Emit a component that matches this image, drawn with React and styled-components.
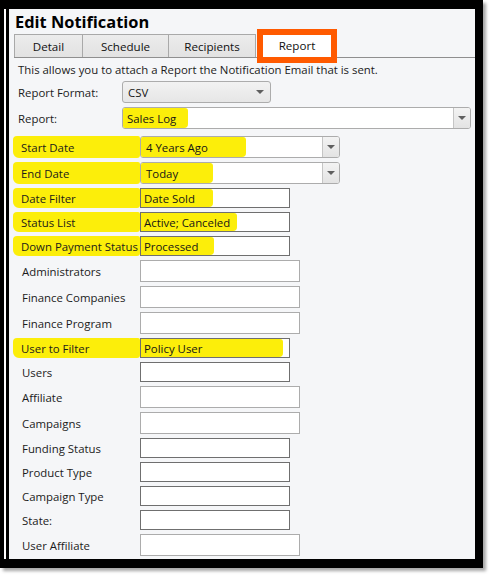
import React from "react";
import styled, { createGlobalStyle } from "styled-components";

const GlobalStyle = createGlobalStyle`
  html, body {
    margin: 0;
    padding: 0;
    background: #ffffff;
  }
  body {
    font-family: "Open Sans", "Noto Sans", sans-serif;
    font-size: 11.4px;
    color: #1b1b1b;
  }
`;

const Page = styled.div`
  width: 490px;
  height: 576px;
  background: #ffffff;
`;

const Frame = styled.div`
  width: 471px;
  height: 550px;
  border-top: 9px solid #000;
  border-right: 8px solid #000;
  border-bottom: 9px solid #000;
  border-left: 4px solid #000;
  background: #ffffff;
  box-shadow: 3px 3px 3px rgba(0, 0, 0, 0.35);
  display: flex;
`;

const Panel = styled.div`
  flex: 1;
  margin-left: 2px;
  border-left: 3px solid #000;
  background: #f5f6f8;
  display: flex;
  flex-direction: column;
  padding-left: 5px;
  overflow: hidden;
`;

const Title = styled.h1`
  margin: 0;
  height: 25px;
  padding-left: 1px;
  font-size: 16.4px;
  font-weight: 700;
  line-height: 25px;
  color: #000;
`;

const TabBar = styled.div`
  display: flex;
  height: 23px;
  border-bottom: 1px solid #8f8f8f;
`;

const Tab = styled.div`
  position: relative;
  box-sizing: border-box;
  width: ${(p) => p.$w}px;
  margin-left: ${(p) => (p.$active ? 1 : 0)}px;
  height: 23px;
  display: flex;
  align-items: center;
  justify-content: center;
  font-size: 11.6px;
  color: #111;
  background: ${(p) => (p.$active ? "#ffffff" : "linear-gradient(#ececec, #e2e2e2)")};
  border: ${(p) => (p.$active ? "none" : "1px solid #a9a9a9")};
  border-bottom: none;
  border-left-width: ${(p) => (p.$first ? 1 : 0)}px;

  ${(p) =>
    p.$active &&
    `
    &::after {
      content: "";
      position: absolute;
      left: 0;
      right: 0;
      top: -5px;
      bottom: -6px;
      border: 6px solid #ff5a00;
    }
  `}
`;

const Body = styled.div`
  display: flex;
  flex-direction: column;
  padding-top: 3px;
`;

const Intro = styled.p`
  margin: 0 0 0 4px;
  height: 18px;
  line-height: 18px;
`;

const TopGrid = styled.div`
  display: grid;
  grid-template-columns: 104px auto;
  row-gap: 4px;
  align-items: center;
  padding-left: 4px;
  margin-top: 2px;
`;

const FieldGrid = styled.div`
  display: grid;
  grid-template-columns: 126px auto;
  row-gap: 4px;
  align-items: center;
  margin-top: 7px;
`;

const Label = styled.div`
  display: flex;
  align-items: center;
  height: ${(p) => (p.$marked ? p.$h || 22 : 20)}px;
  padding-left: ${(p) => p.$pad ?? 8}px;
  margin-left: ${(p) => (p.$marked ? -1 : 0)}px;
  background: ${(p) => (p.$marked ? "#fcee0a" : "transparent")};
  border-radius: ${(p) => (p.$marked ? "4px 2px 3px 6px" : 0)};
  white-space: nowrap;
`;

const Combo = styled.div`
  box-sizing: border-box;
  width: ${(p) => p.$w}px;
  height: 22px;
  display: flex;
  align-items: stretch;
  border: 1px solid #acacac;
  border-radius: 3px;
  background: ${(p) => (p.$gray ? "linear-gradient(#f2f2f2, #e6e6e6)" : "#ffffff")};
  overflow: hidden;
`;

const ComboValue = styled.div`
  flex: 1;
  display: flex;
  align-items: stretch;
`;

const DropButton = styled.div`
  width: 16px;
  display: flex;
  align-items: center;
  justify-content: center;
  background: ${(p) => (p.$plain ? "transparent" : "linear-gradient(#f3f3f3, #e3e3e3)")};
  border-left: ${(p) => (p.$plain ? "none" : "1px solid #c5c5c5")};
  margin-right: ${(p) => (p.$plain ? 2 : 0)}px;
`;

const Arrow = styled.span`
  width: 0;
  height: 0;
  border-left: 4px solid transparent;
  border-right: 4px solid transparent;
  border-top: 4px solid #5f5f5f;
`;

const Input = styled.div`
  box-sizing: border-box;
  width: ${(p) => (p.$light ? 160 : 150)}px;
  height: ${(p) => (p.$light ? 22 : 20)}px;
  border: 1px solid ${(p) => (p.$light ? "#acacac" : "#6f6f6f")};
  background: #ffffff;
  display: flex;
  align-items: stretch;
`;

const Value = styled.span`
  display: flex;
  align-items: center;
  padding-left: ${(p) => p.$pad ?? 3}px;
  width: ${(p) => (p.$w ? `${p.$w}px` : "auto")};
  box-sizing: border-box;
  background: ${(p) => (p.$w ? "#fcee0a" : "transparent")};
  border-radius: ${(p) => (p.$w ? "0 3px 4px 0" : 0)};
  white-space: nowrap;
  color: #151515;
`;

const fields = [
  { label: "Date Filter", value: "Date Sold", mark: 72 },
  { label: "Status List", value: "Active; Canceled", mark: 96 },
  { label: "Down Payment Status", value: "Processed", mark: 73 },
  { label: "Administrators", light: true },
  { label: "Finance Companies", light: true },
  { label: "Finance Program", light: true },
  { label: "User to Filter", value: "Policy User", mark: 142 },
  { label: "Users" },
  { label: "Affiliate", light: true },
  { label: "Campaigns", light: true },
  { label: "Funding Status" },
  { label: "Product Type" },
  { label: "Campaign Type" },
  { label: "State:" },
  { label: "User Affiliate", light: true },
];

const App = () => {
  return (
    <Page>
      <GlobalStyle />
      <Frame>
        <Panel>
          <Title>Edit Notification</Title>
          <TabBar>
            <Tab $w={69} $first>Detail</Tab>
            <Tab $w={86}>Schedule</Tab>
            <Tab $w={87}>Recipients</Tab>
            <Tab $w={80} $active>Report</Tab>
          </TabBar>
          <Body>
            <Intro>This allows you to attach a Report the Notification Email that is sent.</Intro>
            <TopGrid>
              <Label $pad={0} $h={22}>Report Format:</Label>
              <Combo $w={149} $gray>
                <ComboValue>
                  <Value $pad={5}>CSV</Value>
                </ComboValue>
                <DropButton $plain>
                  <Arrow />
                </DropButton>
              </Combo>
              <Label $pad={0} $h={22}>Report:</Label>
              <Combo $w={349}>
                <ComboValue>
                  <Value $pad={4} $w={65}>Sales Log</Value>
                </ComboValue>
                <DropButton>
                  <Arrow />
                </DropButton>
              </Combo>
            </TopGrid>
            <FieldGrid>
              <Label $marked>Start Date</Label>
              <Combo $w={200}>
                <ComboValue>
                  <Value $pad={5} $w={105}>4 Years Ago</Value>
                </ComboValue>
                <DropButton>
                  <Arrow />
                </DropButton>
              </Combo>
              <Label $marked>End Date</Label>
              <Combo $w={200}>
                <ComboValue>
                  <Value $pad={5} $w={72}>Today</Value>
                </ComboValue>
                <DropButton>
                  <Arrow />
                </DropButton>
              </Combo>
              {fields.map((f) => (
                <React.Fragment key={f.label}>
                  <Label $marked={!!f.mark} $h={f.light ? 22 : 20}>
                    {f.label}
                  </Label>
                  <Input $light={f.light}>
                    {f.value && <Value $w={f.mark}>{f.value}</Value>}
                  </Input>
                </React.Fragment>
              ))}
            </FieldGrid>
          </Body>
        </Panel>
      </Frame>
    </Page>
  );
};

export default App;
